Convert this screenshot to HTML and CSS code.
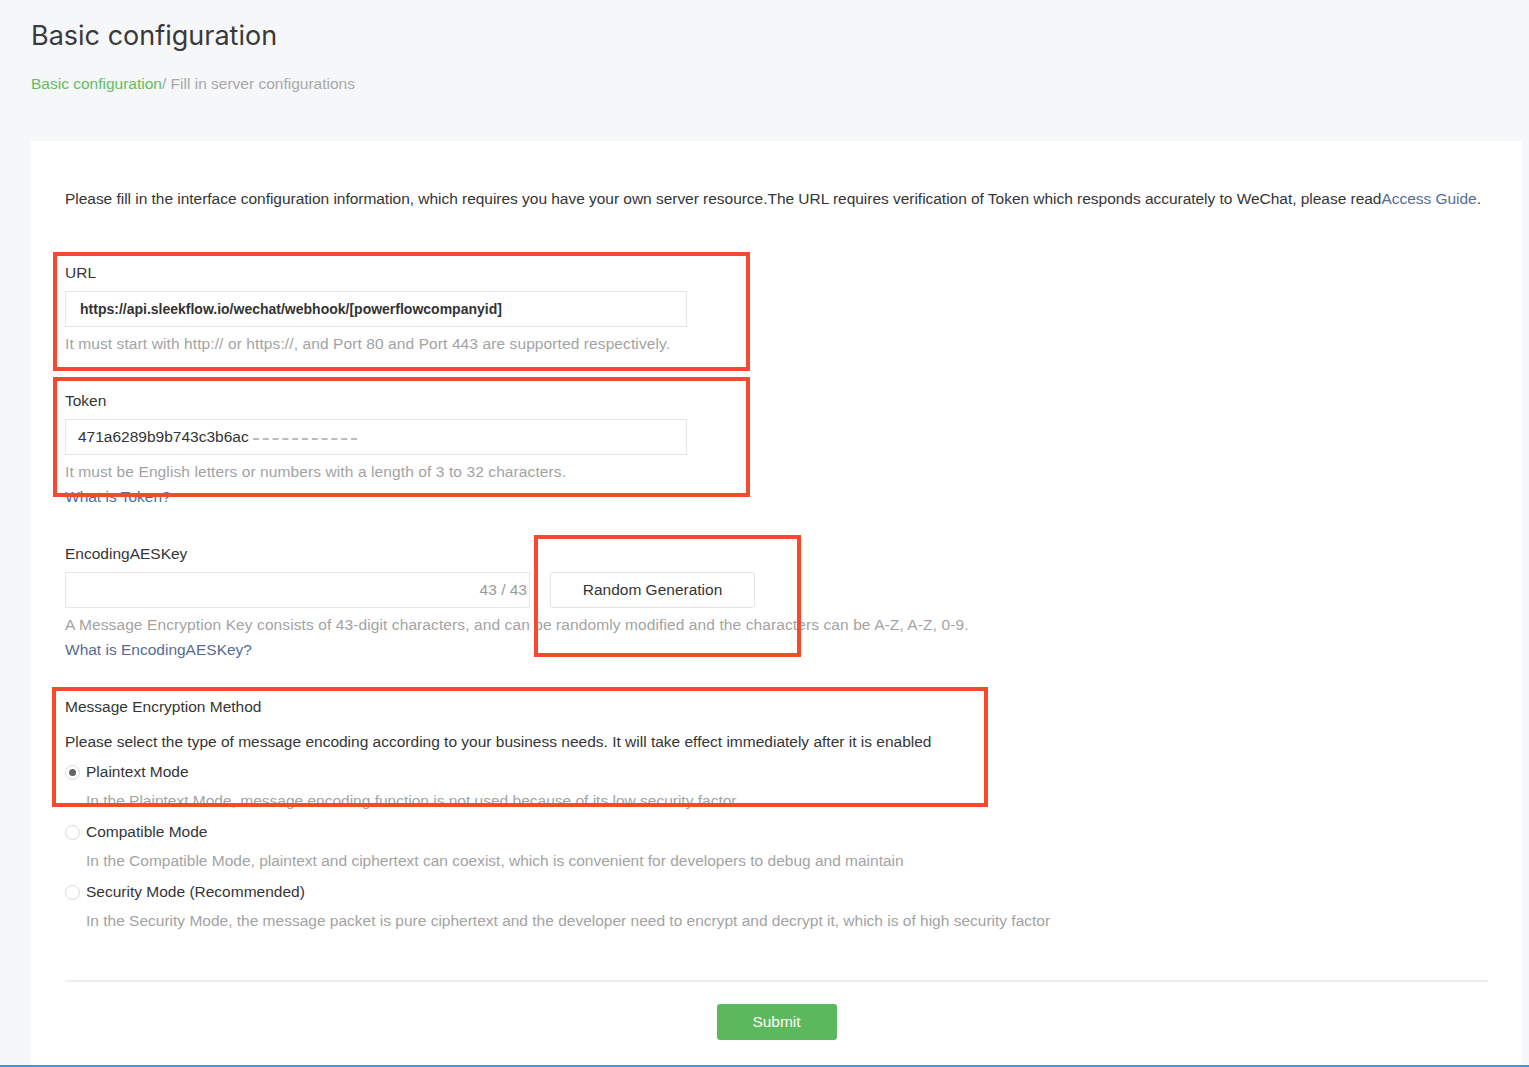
FILE: index.html
```html
<!DOCTYPE html>
<html lang="en">
<head>
    <meta charset="UTF-8">
    <meta name="viewport" content="width=device-width, initial-scale=1.0">
    <title>Basic configuration</title>
    <link rel="stylesheet" href="styles.css">
</head>
<body>
    <div class="page">
        <h1 class="page-title">Basic configuration</h1>
        <div class="breadcrumb">
            <span class="crumb-active">Basic configuration</span><span class="crumb">/ Fill in server configurations</span>
        </div>

        <div class="card">
            <p class="intro">Please fill in the interface configuration information, which requires you have your own server resource.The URL requires verification of Token which responds accurately to WeChat, please read<a href="#" class="link">Access Guide</a>.</p>

            <div class="field">
                <div class="label">URL</div>
                <div class="input input-url">https://api.sleekflow.io/wechat/webhook/[powerflowcompanyid]</div>
                <div class="help">It must start with http:// or https://, and Port 80 and Port 443 are supported respectively.</div>
            </div>

            <div class="field">
                <div class="label">Token</div>
                <div class="input">471a6289b9b743c3b6ac<span class="masked"></span></div>
                <div class="help">It must be English letters or numbers with a length of 3 to 32 characters.</div>
                <a href="#" class="link field-link">What is Token?</a>
            </div>

            <div class="field">
                <div class="label">EncodingAESKey</div>
                <div class="input-row">
                    <div class="input input-key"><span class="counter">43 / 43</span></div>
                    <button class="btn-plain">Random Generation</button>
                </div>
                <div class="help">A Message Encryption Key consists of 43-digit characters, and can be randomly modified and the characters can be A-Z, A-Z, 0-9.</div>
                <a href="#" class="link help-link">What is EncodingAESKey?</a>
            </div>

            <div class="field">
                <div class="label">Message Encryption Method</div>
                <div class="method-desc">Please select the type of message encoding according to your business needs. It will take effect immediately after it is enabled</div>
                <div class="radio-list">
                    <div class="radio-item">
                        <div class="radio-line"><span class="radio checked"></span>Plaintext Mode</div>
                        <div class="radio-help">In the Plaintext Mode, message encoding function is not used because of its low security factor</div>
                    </div>
                    <div class="radio-item">
                        <div class="radio-line"><span class="radio"></span>Compatible Mode</div>
                        <div class="radio-help">In the Compatible Mode, plaintext and ciphertext can coexist, which is convenient for developers to debug and maintain</div>
                    </div>
                    <div class="radio-item">
                        <div class="radio-line"><span class="radio"></span>Security Mode (Recommended)</div>
                        <div class="radio-help">In the Security Mode, the message packet is pure ciphertext and the developer need to encrypt and decrypt it, which is of high security factor</div>
                    </div>
                </div>
            </div>

            <div class="actions">
                <button class="btn-submit">Submit</button>
            </div>
        </div>

        <!-- annotation boxes drawn over the screenshot -->
        <div class="mark mark-url"></div>
        <div class="mark mark-token"></div>
        <div class="mark mark-random"></div>
        <div class="mark mark-method"></div>
    </div>
</body>
</html>
```

FILE: styles.css
```css
:root {
    --bg-color: #f6f7f9;
    --text-color: #353535;
    --muted-color: #a3a3a3;
    --link-color: #576b95;
    --green: #5cb85c;
    --mark-color: #f7492d;
}

* {
    box-sizing: border-box;
}

body {
    margin: 0;
    background-color: var(--bg-color);
    font-family: 'Liberation Sans', Arial, sans-serif;
    color: var(--text-color);
    font-size: 15.5px;
}

.page {
    position: relative;
    height: 1067px;
    overflow: hidden;
    padding: 0 7px 0 31px;
    border-bottom: 2px solid #4a90e2;
}

.page-title {
    margin: 0;
    padding-top: 18px;
    font-family: 'Inter', sans-serif;
    font-size: 27px;
    font-weight: 400;
    line-height: 36px;
    color: #3a3a3a;
}

.breadcrumb {
    margin-top: 20px;
    font-size: 15.5px;
    line-height: 20px;
}

.crumb-active {
    color: #62bd62;
}

.crumb {
    color: #a8a8a8;
}

.card {
    margin-top: 47px;
    background-color: white;
    padding: 48px 34px 40px;
    height: 1000px;
}

.intro {
    margin: 0;
    line-height: 20px;
    letter-spacing: -0.03px;
}

.link {
    color: var(--link-color);
    text-decoration: none;
}

.field {
    margin-top: 37px;
}

.field:first-of-type {
    margin-top: 54px;
}

.label {
    line-height: 20px;
}

.input {
    margin-top: 8px;
    width: 622px;
    height: 36px;
    border: 1px solid #e7e7eb;
    padding: 0 12px;
    display: flex;
    align-items: center;
    color: #333;
}

.input-url {
    font-weight: bold;
    font-size: 14px;
    padding-left: 14px;
}

.masked {
    display: inline-block;
    width: 104px;
    height: 6px;
    margin-left: 4px;
    border-bottom: 2px dashed #bbb;
}

.input-row {
    display: flex;
    gap: 20px;
    align-items: center;
}

.input-key {
    width: 465px;
    justify-content: flex-end;
    padding-right: 2px;
}

.counter {
    color: #9a9a9a;
}

.btn-plain {
    margin-top: 8px;
    width: 205px;
    height: 36px;
    background: white;
    border: 1px solid #e4e4e4;
    border-radius: 3px;
    font-family: inherit;
    font-size: 15.5px;
    color: #353535;
}

.help {
    margin-top: 7px;
    line-height: 20px;
    color: var(--muted-color);
    letter-spacing: 0.1px;
}

.field-link {
    display: block;
    margin-top: 5px;
    line-height: 20px;
}

.help-link {
    display: block;
    margin-top: 5px;
    line-height: 20px;
}

.method-desc {
    margin-top: 15px;
    line-height: 20px;
}

.radio-list {
    margin-top: 10px;
    display: flex;
    flex-direction: column;
    gap: 11px;
}

.radio-line {
    display: flex;
    align-items: center;
    gap: 6px;
    line-height: 20px;
}

.radio {
    width: 15px;
    height: 15px;
    border: 1px solid #dadada;
    border-radius: 50%;
    background: white;
    position: relative;
}

.radio.checked::after {
    content: "";
    position: absolute;
    left: 3px;
    top: 3px;
    width: 7px;
    height: 7px;
    border-radius: 50%;
    background: #666;
}

.radio-help {
    margin-top: 9px;
    padding-left: 21px;
    line-height: 20px;
    color: var(--muted-color);
}

.actions {
    margin-top: 49px;
    border-top: 2px solid #eeeeee;
    padding-top: 22px;
    display: flex;
    justify-content: center;
}

.btn-submit {
    width: 120px;
    height: 36px;
    background-color: var(--green);
    color: white;
    border: none;
    border-radius: 3px;
    font-family: inherit;
    font-size: 15.5px;
}

.mark {
    position: absolute;
    border: 4px solid var(--mark-color);
}

.mark-url {
    left: 53px;
    top: 252px;
    width: 697px;
    height: 119px;
}

.mark-token {
    left: 53px;
    top: 377px;
    width: 697px;
    height: 120px;
}

.mark-random {
    left: 534px;
    top: 535px;
    width: 267px;
    height: 122px;
}

.mark-method {
    left: 52px;
    top: 687px;
    width: 936px;
    height: 120px;
}
```
